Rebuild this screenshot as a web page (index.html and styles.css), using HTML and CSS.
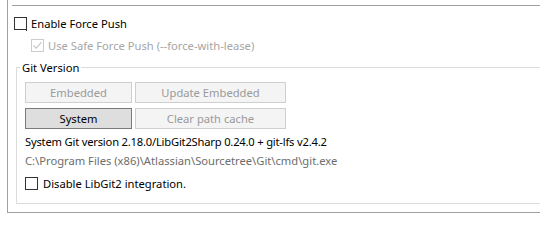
FILE: index.html
```html
<!DOCTYPE html>
<html>
<head>
<meta charset="utf-8">
<link rel="stylesheet" href="styles.css">
</head>
<body>
<div class="frame">
  <div class="topline"></div>
  <label class="check force">
    <span class="box"><span class="focus"></span></span>
    <span class="label">Enable Force Push</span>
  </label>
  <label class="check safe disabled">
    <span class="box"><svg class="tick" viewBox="0 0 11 11" width="11" height="11"><path d="M1.5 5.5 L4.2 8.2 L9.5 2.2" fill="none" stroke="#c6c6c6" stroke-width="1.1"/></svg></span>
    <span class="label">Use Safe Force Push (--force-with-lease)</span>
  </label>
  <fieldset class="group">
    <legend>Git Version</legend>
    <div class="btnrow">
      <button class="btn b1" disabled>Embedded</button>
      <button class="btn b2" disabled>Update Embedded</button>
    </div>
    <div class="btnrow second">
      <button class="btn b1 selected">System</button>
      <button class="btn b2" disabled>Clear path cache</button>
    </div>
    <div class="info">System Git version 2.18.0/LibGit2Sharp 0.24.0 + git-lfs v2.4.2</div>
    <div class="path">C:\Program Files (x86)\Atlassian\Sourcetree\Git\cmd\git.exe</div>
    <label class="check libgit">
      <span class="box"></span>
      <span class="label">Disable LibGit2 integration.</span>
    </label>
  </fieldset>
</div>
</body>
</html>
```
FILE: styles.css
```css
html, body {
  margin: 0;
  padding: 0;
  background: #ffffff;
  overflow: hidden;
}
body {
  font-family: "Noto Sans", "Open Sans", sans-serif;
  font-size: 11.2px;
  color: #000000;
  width: 540px;
  height: 233px;
}
.frame {
  box-sizing: border-box;
  margin-left: 7px;
  width: 533px;
  height: 213px;
  border-left: 1px solid #a0a0a0;
  border-bottom: 1px solid #a0a0a0;
  display: flex;
  flex-direction: column;
  align-items: flex-start;
}
.topline {
  margin-top: 5px;
  margin-left: 4px;
  align-self: stretch;
  height: 0;
  border-top: 1px solid #a0a0a0;
}
.check {
  display: flex;
  align-items: center;
  height: 15px;
  line-height: 15px;
  white-space: nowrap;
}
.box {
  position: relative;
  box-sizing: border-box;
  width: 13px;
  height: 13px;
  border: 1px solid #333333;
  background: #ffffff;
  margin-right: 4px;
  flex: none;
  display: flex;
  align-items: center;
  justify-content: center;
}
.focus {
  position: absolute;
  right: -1px;
  bottom: -2px;
  width: 1px;
  height: 3px;
  background: #333333;
}
.force {
  margin-top: 10px;
  margin-left: 6px;
}
.safe {
  margin-top: 7px;
  margin-left: 23px;
}
.disabled .box {
  border-color: #cccccc;
}
.disabled .label {
  color: #a6a6a6;
}
.label {
  display: block;
}
.group {
  margin: 7px 0 8px 8px;
  padding: 0 8px 12px 8px;
  border: 1px solid #dcdcdc;
  border-right: none;
  align-self: stretch;
  flex: 1;
  min-width: 0;
  display: flex;
  flex-direction: column;
  align-items: flex-start;
}
.group legend {
  margin-left: -5px;
  padding: 0 2px;
  line-height: 15px;
  color: #000000;
}
.btnrow {
  display: flex;
  gap: 3px;
  margin-top: 7px;
}
.btnrow.second {
  margin-top: 5px;
}
.btn {
  box-sizing: border-box;
  height: 21px;
  font-family: inherit;
  font-size: 11.2px;
  padding: 0;
  margin: 0;
  background: #e1e1e1;
  border: 1px solid #adadad;
  color: #000000;
  border-radius: 0;
  line-height: 18px;
}
.btn:disabled {
  background: #f4f4f4;
  border-color: #cfcfcf;
  color: #9a9a9a;
}
.b1 { width: 107px; }
.b2 { width: 151px; }
.btn.selected {
  background: #dedede;
  border-color: #7a7a7a;
}
.info {
  margin-top: 5px;
  line-height: 16px;
  white-space: nowrap;
  letter-spacing: -0.2px;
}
.path {
  margin-top: 3px;
  line-height: 16px;
  color: #6d6d6d;
  white-space: nowrap;
}
.libgit {
  margin-top: 7px;
}
.libgit .label {
  margin-left: 1px;
}
```
